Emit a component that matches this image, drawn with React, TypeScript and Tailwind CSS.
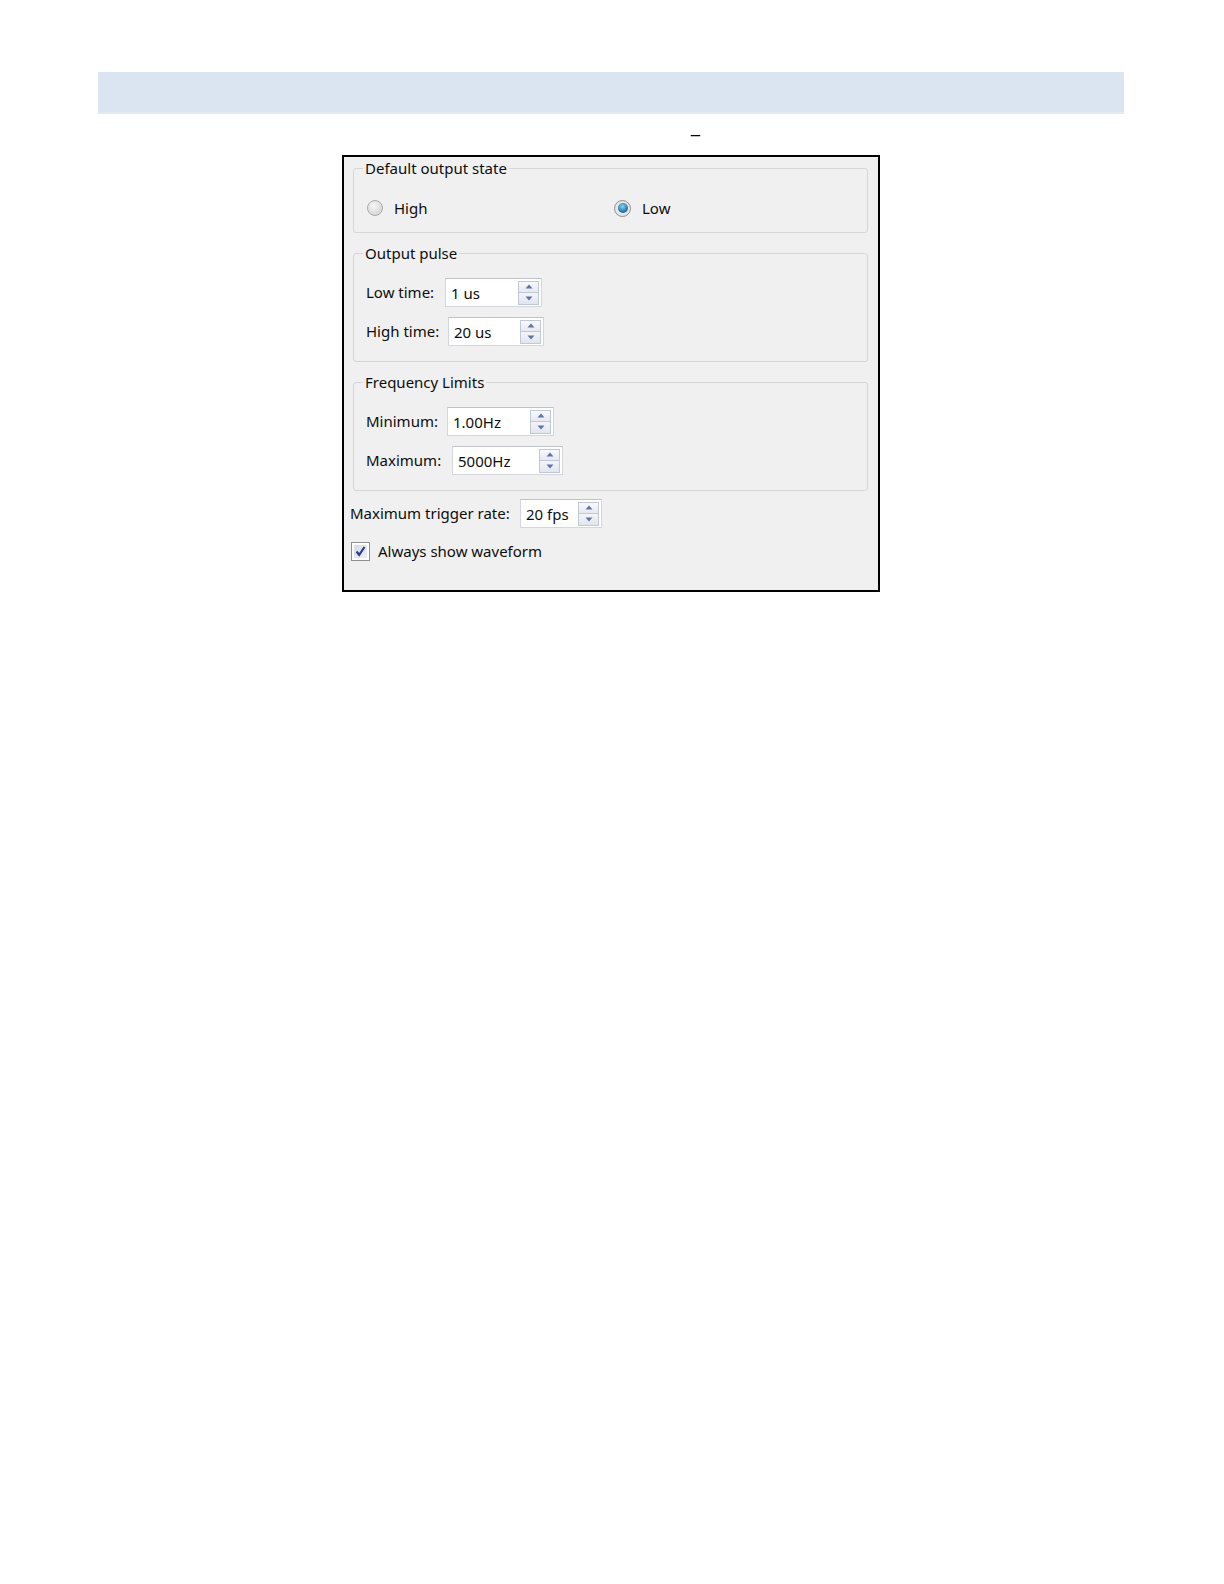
import React from "react";

const font = { fontFamily: '"Noto Sans", "Open Sans", sans-serif' };

function Arrow({ up }: { up: boolean }) {
  return (
    <svg width="8" height="5" viewBox="0 0 8 5">
      {up ? <path d="M0.5 4.5 L4 0.5 L7.5 4.5Z" fill="#5f73aa" /> : <path d="M0.5 0.5 L4 4.5 L7.5 0.5Z" fill="#5f73aa" />}
    </svg>
  );
}

function SpinBox({ value, className }: { value: string; className: string }) {
  return (
    <div className={"flex items-center h-[29px] bg-white border border-[#d3d6db] border-t-[#bfc3c9] " + className}>
      <span className="flex-1 pl-[5px] text-[15px] text-[#0d0d0d] leading-none pt-[2px]">{value}</span>
      <div className="flex flex-col w-[21px] h-[24px] mr-[2px]">
        <div className="flex-1 flex items-center justify-center border border-[#c0c7d5] bg-gradient-to-b from-[#f8f9fc] to-[#e6e9f1]">
          <Arrow up />
        </div>
        <div className="flex-1 flex items-center justify-center border border-t-0 border-[#c0c7d5] bg-gradient-to-b from-[#f3f5f9] to-[#e1e5ee]">
          <Arrow up={false} />
        </div>
      </div>
    </div>
  );
}

function Group({ title, className, children }: { title: string; className: string; children: React.ReactNode }) {
  return (
    <fieldset className={"border border-[#d6d6d6] rounded-[3px] " + className}>
      <legend className="ml-[9px] px-[2px] text-[15px] leading-[20px] text-[#0d0d0d]">{title}</legend>
      {children}
    </fieldset>
  );
}

export default function App() {
  return (
    <div className="w-full bg-white pb-[40px]" style={font}>
      <div className="pt-[72px] pl-[98px]">
        <div className="w-[1026px] h-[42px] bg-[#dbe5f1] border-b-2 border-[#e3eaf4]" />
      </div>
      <div className="pl-[691px] pt-[4px] h-[41px] text-[16px] leading-[20px] text-black" style={{ fontFamily: '"Liberation Sans", sans-serif' }}>
        _
      </div>
      <div className="ml-[342px] w-[538px] h-[437px] border-2 border-black bg-[#f0f0f0] pl-[9px] pr-[10px] text-[15px] text-[#0d0d0d]">
        <Group title="Default output state" className="h-[75px] mt-[1px]">
          <div className="flex items-center pl-[13px] pt-[20px] h-[40px]">
            <div className="flex items-center w-[247px]">
              <span className="w-[16px] h-[16px] rounded-full border border-[#aaaaaa] bg-[radial-gradient(circle_at_40%_35%,#f6f6f6,#cdcdcd)]" />
              <span className="ml-[11px]">High</span>
            </div>
            <div className="flex items-center">
              <span className="w-[17px] h-[17px] rounded-full border border-[#8f8f8f] bg-[#e6e6e6] flex items-center justify-center">
                <span className="w-[10px] h-[10px] rounded-full bg-[radial-gradient(circle_at_45%_35%,#86d4f6,#1b6b9c_70%)]" />
              </span>
              <span className="ml-[11px]">Low</span>
            </div>
          </div>
        </Group>

        <Group title="Output pulse" className="h-[119px] mt-[10px]">
          <div className="flex flex-col gap-[10px] pl-[12px] pt-[15px]">
            <div className="flex items-center">
              <span className="w-[79px]">Low time:</span>
              <SpinBox value="1 us" className="w-[97px]" />
            </div>
            <div className="flex items-center">
              <span className="w-[82px]">High time:</span>
              <SpinBox value="20 us" className="w-[96px]" />
            </div>
          </div>
        </Group>

        <Group title="Frequency Limits" className="h-[119px] mt-[10px]">
          <div className="flex flex-col gap-[10px] pl-[12px] pt-[15px]">
            <div className="flex items-center">
              <span className="w-[81px]">Minimum:</span>
              <SpinBox value="1.00Hz" className="w-[107px]" />
            </div>
            <div className="flex items-center">
              <span className="w-[86px]">Maximum:</span>
              <SpinBox value="5000Hz" className="w-[111px]" />
            </div>
          </div>
        </Group>

        <div className="flex items-center -ml-[3px] mt-[8px]">
          <span className="w-[170px]">Maximum trigger rate:</span>
          <SpinBox value="20 fps" className="w-[82px]" />
        </div>

        <div className="flex items-center -ml-[2px] mt-[12px]">
          <span className="w-[19px] h-[19px] border border-[#8e8f8f] bg-white p-[2px]">
            <span className="flex w-full h-full items-center justify-center bg-gradient-to-br from-[#d3dbe6] to-[#eef1f6]">
              <svg width="11" height="11" viewBox="0 0 11 11">
                <path d="M1.5 5.5 L4.2 8.8 L9.5 1" fill="none" stroke="#2d3f8c" strokeWidth="2.2" />
              </svg>
            </span>
          </span>
          <span className="ml-[8px]">Always show waveform</span>
        </div>
      </div>
    </div>
  );
}
